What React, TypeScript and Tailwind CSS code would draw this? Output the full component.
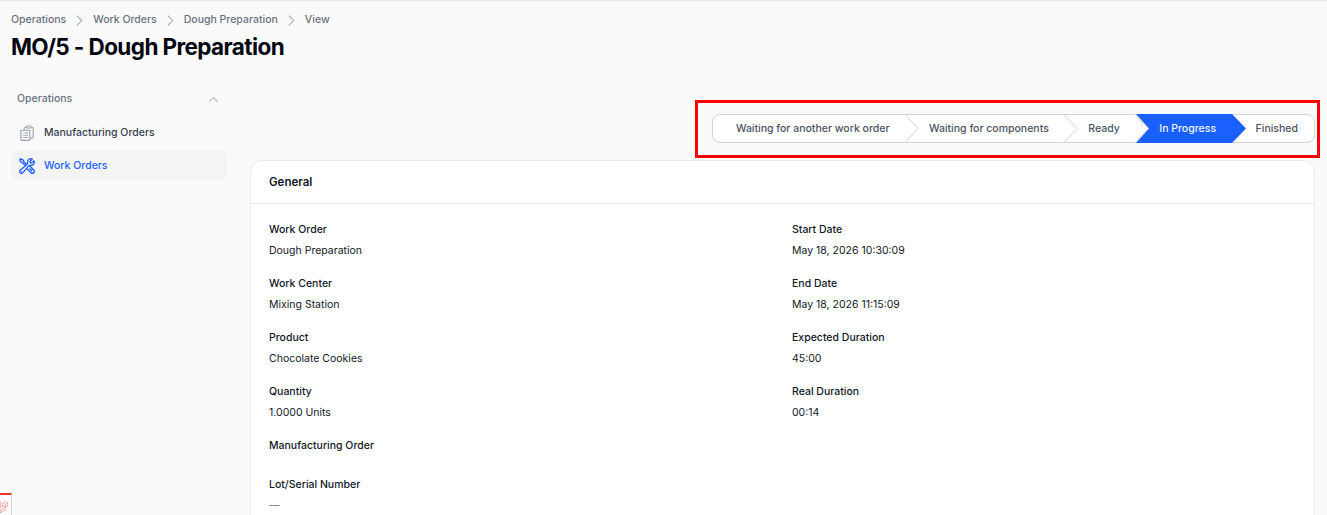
import { HiOutlineClipboardDocumentList, HiOutlineWrenchScrewdriver, HiChevronRight, HiChevronUp } from "react-icons/hi2";
import { FaLaravel } from "react-icons/fa";

const steps = [
  { label: "Waiting for another work order", pad: "pl-[23px] pr-[15.5px]" },
  { label: "Waiting for components", pad: "pl-[24px] pr-[15.5px]" },
  { label: "Ready", pad: "pl-[24px] pr-[15.5px]" },
  { label: "In Progress", active: true, pad: "pl-[24px] pr-[15.5px]" },
  { label: "Finished", last: true, pad: "pl-[24px] pr-[16px]" },
];

const left: [string, string | null][] = [
  ["Work Order", "Dough Preparation"],
  ["Work Center", "Mixing Station"],
  ["Product", "Chocolate Cookies"],
  ["Quantity", "1.0000 Units"],
  ["Manufacturing Order", null],
  ["Lot/Serial Number", "—"],
];
const right: [string, string][] = [
  ["Start Date", "May 18, 2026 10:30:09"],
  ["End Date", "May 18, 2026 11:15:09"],
  ["Expected Duration", "45:00"],
  ["Real Duration", "00:14"],
];

function Field({ label, value }: { label: string; value: string | null }) {
  return (
    <div className="flex flex-col gap-[5px]">
      <div className="text-[10.5px] leading-[16px] font-medium text-[#111827]">{label}</div>
      {value === null ? (
        <div className="h-[1px]" />
      ) : (
        <div className={`text-[10.5px] leading-[16px] ${value === "—" ? "text-[#6b7280]" : "text-[#111827]"}`}>{value}</div>
      )}
    </div>
  );
}

function Crumb({ text, sep = true }: { text: string; sep?: boolean }) {
  return (
    <>
      <span>{text}</span>
      {sep && <HiChevronRight className="w-[15px] h-[15px] mx-[6px] text-[#9ca3af]" />}
    </>
  );
}

export default function App() {
  return (
    <div
      className="relative w-[1327px] h-[515px] overflow-hidden bg-[#fafafa] border-t border-[#e5e7eb]"
      style={{ fontFamily: "Inter, 'Noto Sans', sans-serif" }}
    >
      <div className="pl-[11px] pt-[11px]">
        <div className="flex items-center h-[16px] text-[10.5px] font-medium text-[#6b7280]">
          <Crumb text="Operations" />
          <Crumb text="Work Orders" />
          <Crumb text="Dough Preparation" />
          <Crumb text="View" sep={false} />
        </div>
        <h1 className="mt-[3px] text-[22.5px] leading-[32px] font-bold tracking-[-0.6px] text-[#030712]">MO/5 - Dough Preparation</h1>
      </div>

      <div className="flex pl-[11px] pr-[12px] mt-[27px] gap-[23px]">
        <aside className="w-[216px] shrink-0 pt-[1px]">
          <div className="flex items-center justify-between pl-[6px] pr-[7px] h-[16px] mb-[10px] text-[10.5px] font-medium text-[#6b7280]">
            <span>Operations</span>
            <HiChevronUp className="w-[13px] h-[13px] text-[#9ca3af]" />
          </div>
          <div className="flex flex-col gap-[3px]">
            <div className="flex items-center gap-[8px] h-[30px] pt-[1px] px-[7px] rounded-lg text-[10.5px] font-medium text-[#374151]">
              <HiOutlineClipboardDocumentList className="w-[18px] h-[18px] shrink-0 text-[#9ca3af]" />
              Manufacturing Orders
            </div>
            <div className="flex items-center gap-[8px] h-[30px] pt-[1px] px-[7px] rounded-lg bg-[#f4f4f5] text-[10.5px] font-medium text-[#2563ff]">
              <HiOutlineWrenchScrewdriver className="w-[18px] h-[18px] shrink-0 text-[#1a5cff]" strokeWidth={1.7} />
              Work Orders
            </div>
          </div>
        </aside>

        <main className="flex-1 min-w-0">
          <div className="flex justify-end mt-[24px]">
            <div className="flex h-[29px] rounded-lg border border-[#d1d5db] bg-white">
              {steps.map((s) => (
                <div
                  key={s.label}
                  className={`relative flex items-center ${s.pad} text-[10.5px] font-medium whitespace-nowrap ${s.active ? "text-[#eff6ff]" : "text-[#4b5563]"}`}
                >
                  {s.active && (
                    <svg className="absolute left-[1px] top-[-1px] h-[29px] w-[110px] z-10" viewBox="0 0 110 29" preserveAspectRatio="none">
                      <polygon points="0,0 96,0 110,14.5 96,29 0,29 13,14.5" fill="#1a5fff" />
                    </svg>
                  )}
                  {!s.active && !s.last && (
                    <svg className="absolute right-[-14px] top-[-1px] h-[29px] w-[15px] z-10" viewBox="0 0 15 29">
                      <polygon points="0,0 14,14.5 0,29" fill="#ffffff" />
                      <polyline points="0.5,0 14,14.5 0.5,29" fill="none" stroke="#d1d5db" strokeWidth="1" />
                    </svg>
                  )}
                  <span className="relative z-20">{s.label}</span>
                </div>
              ))}
            </div>
          </div>

          <section className="mt-[17px] rounded-xl border border-[#e9eaec] bg-white h-[420px]">
            <div className="flex items-center h-[43px] pt-[1px] px-[18px] border-b border-[#e5e7eb] text-[11.5px] font-semibold text-[#111827]">General</div>
            <div className="grid grid-cols-2 gap-x-[19px] px-[18px] pt-[18px]">
              <div className="flex flex-col gap-[17px]">
                {left.map(([l, v]) => (
                  <Field key={l} label={l} value={v} />
                ))}
              </div>
              <div className="flex flex-col gap-[17px]">
                {right.map(([l, v]) => (
                  <Field key={l} label={l} value={v} />
                ))}
              </div>
            </div>
          </section>
        </main>
      </div>

      <div className="absolute left-[695px] top-[99px] w-[625px] h-[58px] border-[3px] border-[#ff0000] pointer-events-none z-30" />

      <div className="absolute left-0 top-[492px] w-[12px] h-[23px] bg-[#fafafa] border-t-2 border-t-[#f0382a] border-r border-r-[#d4d4d4] overflow-hidden">
        <FaLaravel className="absolute left-[-5px] top-[5px] w-[13px] h-[13px] text-[#f4645f]" />
      </div>
    </div>
  );
}
